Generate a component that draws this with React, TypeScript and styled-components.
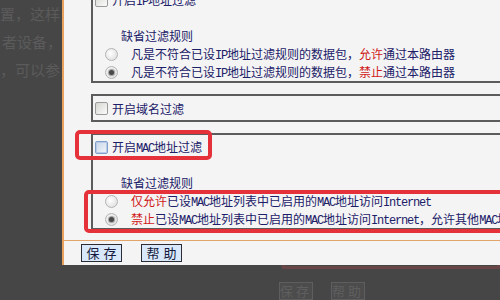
import React from "react";
import styled, { createGlobalStyle, css } from "styled-components";

const GlobalStyle = createGlobalStyle`
  html, body {
    margin: 0;
    padding: 0;
    background: #464646;
  }
  body {
    font-family: "Noto Sans CJK SC", "Noto Sans", sans-serif;
  }
`;

const navy = "#1b2068";
const red = "#d01818";

const Screen = styled.div`
  width: 500px;
  height: 300px;
  overflow: hidden;
  display: grid;
  grid-template-columns: 62px 438px;
  grid-template-rows: 265px 35px;
  background: #464646;
`;

const Backdrop = styled.div`
  grid-row: 1 / 3;
  display: flex;
  flex-direction: column;
  overflow: hidden;
`;

const GhostLine = styled.div<{ $shift: number }>`
  height: 28px;
  line-height: 28px;
  font-size: 15px;
  color: #5b5b5b;
  white-space: nowrap;
  padding-left: ${({ $shift }) => $shift}px;
`;

const Panel = styled.div`
  position: relative;
  background: #f4f4f4;
  border-left: 2px solid #e6a25e;
  overflow: hidden;
  display: flex;
  flex-direction: column;
`;

const Stack = styled.div`
  margin-top: -14px;
  display: flex;
  flex-direction: column;
`;

const FilterBox = styled.div`
  flex-shrink: 0;
  width: 460px;
  margin-left: 27px;
  border: 2px solid #5c5c5c;
  padding: 2px 0 0;
  & + & {
    margin-top: 11px;
  }
`;

const textBase = css`
  font-size: 12px;
  color: ${navy};
  white-space: nowrap;
`;

const CheckRow = styled.label<{ $pad?: boolean }>`
  ${textBase};
  display: flex;
  align-items: center;
  gap: 4px;
  height: 20px;
  padding-left: 2px;
  padding-bottom: ${({ $pad }) => ($pad ? 2 : 0)}px;
`;

const Checkbox = styled.span<{ $focus?: boolean }>`
  flex-shrink: 0;
  width: 11px;
  height: 11px;
  border: 1px solid ${({ $focus }) => ($focus ? "#7f9fcc" : "#9a9a9a")};
  border-radius: 2px;
  background: ${({ $focus }) =>
    $focus
      ? "linear-gradient(135deg, #c9d6e8, #f2f5fa)"
      : "linear-gradient(135deg, #d6d6d2, #fbfbfb)"};
  box-shadow: ${({ $focus }) => ($focus ? "inset 0 0 0 1px #b9cbe6" : "none")};
`;

const RuleTitle = styled.div`
  ${textBase};
  height: 18px;
  line-height: 18px;
  margin-top: 17px;
  padding-left: 28px;
`;

const RadioRow = styled.div`
  ${textBase};
  display: flex;
  align-items: center;
  gap: 13px;
  height: 18px;
  padding-left: 12px;
`;

const Radio = styled.span<{ $checked?: boolean }>`
  position: relative;
  flex-shrink: 0;
  width: 11px;
  height: 11px;
  border: 1px solid #b4b4b4;
  border-radius: 50%;
  background: radial-gradient(circle at 40% 40%, #ffffff, #d8d8d8);
  ${({ $checked }) =>
    $checked &&
    css`
      &::after {
        content: "";
        position: absolute;
        left: 3px;
        top: 3px;
        width: 5px;
        height: 5px;
        border-radius: 50%;
        background: #4a4a4a;
        box-shadow: 0 0 1px 1px #9a9a9a;
      }
    `}
`;

const Red = styled.span`
  color: ${red};
`;

const Half = styled.span`
  font-family: "Liberation Mono", monospace;
  font-size: 12px;
  letter-spacing: -1.2px;
`;

const Divider = styled.div`
  flex-shrink: 0;
  height: 1px;
  margin-top: 10px;
  background: #e2a468;
`;

const ButtonRow = styled.div`
  display: flex;
  gap: 19px;
  margin-top: 3px;
  padding-left: 17px;
`;

const Button = styled.button`
  width: 41px;
  height: 18px;
  padding: 0;
  border: 1px solid #2c2c34;
  background: #d8e8fa;
  color: #14183c;
  font-family: "Noto Sans CJK SC", sans-serif;
  font-size: 13px;
  line-height: 16px;
  letter-spacing: 4px;
  text-indent: 4px;
`;

const Highlight = styled.div<{ $left: number; $top: number; $w: number; $h: number }>`
  position: absolute;
  left: ${({ $left }) => $left}px;
  top: ${({ $top }) => $top}px;
  width: ${({ $w }) => $w}px;
  height: ${({ $h }) => $h}px;
  box-sizing: border-box;
  border: 4px solid #e5323a;
  border-radius: 5px;
  pointer-events: none;
`;

const Below = styled.div`
  display: flex;
  flex-direction: column;
`;

const GhostFrame = styled.div`
  height: 5px;
  margin-left: 220px;
  border: 3px solid #684546;
  border-top: none;
`;

const GhostButtons = styled.div`
  display: flex;
  gap: 18px;
  margin-top: 13px;
  padding-left: 217px;
`;

const GhostButton = styled.div`
  width: 32px;
  height: 16px;
  border: 1px solid #5e5e5e;
  background: #4c4c4c;
  color: #5f5f5f;
  font-size: 13px;
  line-height: 16px;
  letter-spacing: 3px;
  text-align: center;
`;

export default function App() {
  return (
    <>
      <GlobalStyle />
      <Screen>
        <Backdrop>
          <GhostLine $shift={0}>置，这样</GhostLine>
          <GhostLine $shift={2}>者设备，</GhostLine>
          <GhostLine $shift={0}>，可以参</GhostLine>
        </Backdrop>

        <Panel>
          <Stack>
            <FilterBox>
              <CheckRow>
                <Checkbox />
                <span>
                  开启<Half>IP</Half>地址过滤
                </span>
              </CheckRow>
              <RuleTitle>缺省过滤规则</RuleTitle>
              <RadioRow>
                <Radio />
                <span>
                  凡是不符合已设<Half>IP</Half>地址过滤规则的数据包，<Red>允许</Red>通过本路由器
                </span>
              </RadioRow>
              <RadioRow>
                <Radio $checked />
                <span>
                  凡是不符合已设<Half>IP</Half>地址过滤规则的数据包，<Red>禁止</Red>通过本路由器
                </span>
              </RadioRow>
            </FilterBox>

            <FilterBox>
              <CheckRow $pad>
                <Checkbox />
                <span>开启域名过滤</span>
              </CheckRow>
            </FilterBox>

            <FilterBox>
              <CheckRow>
                <Checkbox $focus />
                <span>
                  开启<Half>MAC</Half>地址过滤
                </span>
              </CheckRow>
              <RuleTitle>缺省过滤规则</RuleTitle>
              <RadioRow>
                <Radio />
                <span>
                  <Red>仅允许</Red>已设<Half>MAC</Half>地址列表中已启用的<Half>MAC</Half>地址访问
                  <Half>Internet</Half>
                </span>
              </RadioRow>
              <RadioRow>
                <Radio $checked />
                <span>
                  <Red>禁止</Red>已设<Half>MAC</Half>地址列表中已启用的<Half>MAC</Half>地址访问
                  <Half>Internet</Half>，允许其他<Half>MAC</Half>地址访问<Half>Internet</Half>
                </span>
              </RadioRow>
            </FilterBox>
          </Stack>

          <Divider />
          <ButtonRow>
            <Button>保存</Button>
            <Button>帮助</Button>
          </ButtonRow>

          <Highlight $left={11} $top={130} $w={137} $h={30} />
          <Highlight $left={20} $top={190} $w={440} $h={43} />
        </Panel>

        <Below>
          <GhostFrame />
          <GhostButtons>
            <GhostButton>保存</GhostButton>
            <GhostButton>帮助</GhostButton>
          </GhostButtons>
        </Below>
      </Screen>
    </>
  );
}
